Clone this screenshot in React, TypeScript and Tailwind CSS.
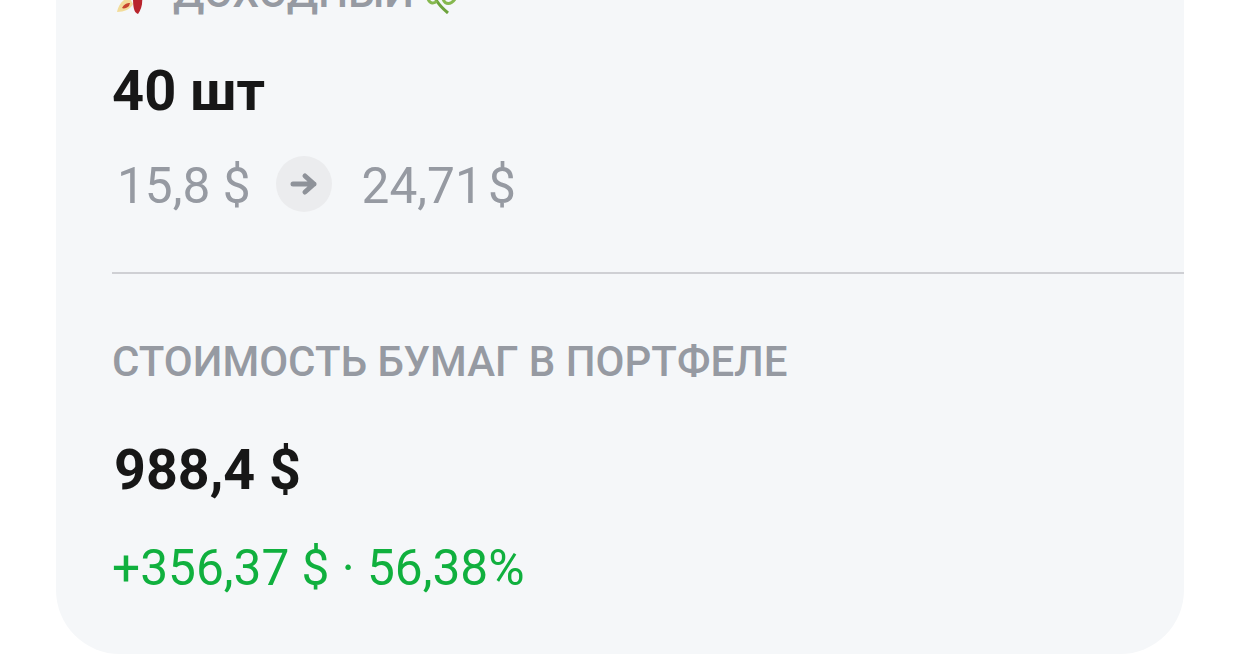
export default function App() {
  return (
    <div className="h-[662px] w-[1240px] overflow-hidden bg-white px-14 font-['Roboto',sans-serif]">
      <div className="flex h-[654px] w-[1128px] flex-col overflow-hidden rounded-b-[64px] bg-[#f5f7f9]">
        <div className="-mt-[23px] flex h-[32px] items-center pl-[57px] text-[42px] font-medium leading-[32px] text-[#969aa2]">
          <svg width="30" height="30" viewBox="0 0 30 30" className="mt-[12px]">
            <path d="M4 28 C5 22 9 16 16 13 L20 20 C18 25 11 28 4 28Z" fill="#f2dc9a" />
            <path d="M9 24 C11 20 14 19 17 19 L16 22 C14 24 11 25 9 24Z" fill="#c8452f" />
            <path d="M20 14 L29 13 C30 20 28 26 25 30 C22 29 20 26 20 14Z" fill="#b8242c" />
          </svg>
          <span className="ml-[30px]">ДОХОДНЫЙ</span>
          <svg width="36" height="30" viewBox="0 0 36 30" className="ml-[6px] mt-[12px]">
            <path d="M15 14 C18 20 22 24 28 29" stroke="#6da33c" strokeWidth="3" fill="none" />
            <path d="M8 15 C10 20 14 20 17 17" stroke="#86b84f" strokeWidth="3" fill="none" />
            <path d="M23 15 C25 21 31 21 35 15" stroke="#86b84f" strokeWidth="3" fill="none" />
          </svg>
        </div>
        <div className="mt-[52px] pl-[56px] text-[56px] font-bold leading-[60px] text-[#171717]">40 шт</div>
        <div className="mt-[37px] flex h-[56px] items-center pl-[61px] text-[49.6px] leading-[56px] text-[#969aa2]">
          <span>15,8 $</span>
          <span className="-mt-[4px] ml-[25px] flex h-[56px] w-[56px] items-center justify-center rounded-full bg-[#ebecee]">
            <svg width="28" height="24" viewBox="0 0 28 24" fill="none" stroke="#8e9299" strokeWidth="5" strokeLinecap="round" strokeLinejoin="round">
              <path d="M3 12 H24 M15 4 L24 12 L15 20" />
            </svg>
          </span>
          <span className="ml-[30px]">24,71{"\u200A"}$</span>
        </div>
        <div className="mt-[58px] ml-[56px] h-[2px] bg-[#cfd0d4]" />
        <div className="mt-[64px] pl-[56px] text-[42px] font-medium leading-[48px] text-[#969aa2]">СТОИМОСТЬ БУМАГ В ПОРТФЕЛЕ</div>
        <div className="mt-[54px] pl-[58px] text-[55.6px] font-bold leading-[60px] text-[#171717]">988,4 $</div>
        <div className="mt-[40px] pl-[56px] text-[49.6px] leading-[56px] text-[#10b03e]">+356,37 $ · 56,38%</div>
      </div>
    </div>
  );
}
